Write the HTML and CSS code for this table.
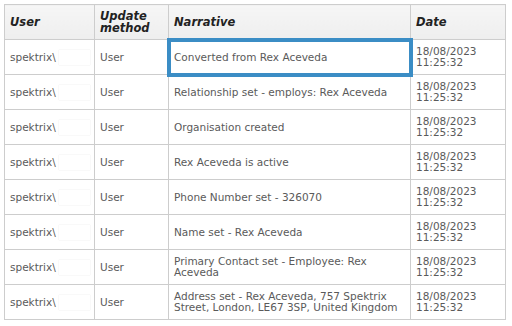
FILE: index.html
```html
<!DOCTYPE html>
<html lang="en">
<head>
    <meta charset="UTF-8">
    <title>Audit Log</title>
    <link rel="stylesheet" href="styles.css">
</head>
<body>
    <div class="log-wrap">
        <table class="log-table">
            <colgroup>
                <col class="col-user">
                <col class="col-method">
                <col class="col-narrative">
                <col class="col-date">
            </colgroup>
            <thead>
                <tr>
                    <th>User</th>
                    <th>Update method</th>
                    <th>Narrative</th>
                    <th>Date</th>
                </tr>
            </thead>
            <tbody>
                <tr>
                    <td class="user">spektrix\<span class="redact"></span></td>
                    <td>User</td>
                    <td class="selected">Converted from Rex Aceveda</td>
                    <td>18/08/2023<br>11:25:32</td>
                </tr>
                <tr>
                    <td class="user">spektrix\<span class="redact"></span></td>
                    <td>User</td>
                    <td>Relationship set - employs: Rex Aceveda</td>
                    <td>18/08/2023<br>11:25:32</td>
                </tr>
                <tr>
                    <td class="user">spektrix\<span class="redact"></span></td>
                    <td>User</td>
                    <td>Organisation created</td>
                    <td>18/08/2023<br>11:25:32</td>
                </tr>
                <tr>
                    <td class="user">spektrix\<span class="redact"></span></td>
                    <td>User</td>
                    <td>Rex Aceveda is active</td>
                    <td>18/08/2023<br>11:25:32</td>
                </tr>
                <tr>
                    <td class="user">spektrix\<span class="redact"></span></td>
                    <td>User</td>
                    <td>Phone Number set - 326070</td>
                    <td>18/08/2023<br>11:25:32</td>
                </tr>
                <tr>
                    <td class="user">spektrix\<span class="redact"></span></td>
                    <td>User</td>
                    <td>Name set - Rex Aceveda</td>
                    <td>18/08/2023<br>11:25:32</td>
                </tr>
                <tr>
                    <td class="user">spektrix\<span class="redact"></span></td>
                    <td>User</td>
                    <td>Primary Contact set - Employee: Rex Aceveda</td>
                    <td>18/08/2023<br>11:25:32</td>
                </tr>
                <tr>
                    <td class="user">spektrix\<span class="redact"></span></td>
                    <td>User</td>
                    <td>Address set - Rex Aceveda, 757 Spektrix Street, London, LE67 3SP, United Kingdom</td>
                    <td>18/08/2023<br>11:25:32</td>
                </tr>
            </tbody>
        </table>
    </div>
</body>
</html>
```

FILE: styles.css
```css
body {
    margin: 0;
    background: #fff;
    font-family: 'DejaVu Sans', Verdana, sans-serif;
    color: #5a5a5a;
}

.log-wrap {
    padding: 4px;
}

.log-table {
    width: 501px;
    border-collapse: collapse;
    table-layout: fixed;
    font-size: 10.5px;
    line-height: 11px;
}

.col-user { width: 90px; }
.col-method { width: 74px; }
.col-narrative { width: 242px; }
.col-date { width: 95px; }

.log-table th,
.log-table td {
    border: 1px solid #cdcdcd;
    height: 34px;
    padding: 0 5px;
    text-align: left;
    vertical-align: middle;
}

.log-table th {
    background: linear-gradient(#f6f6f6, #eeeeee);
    color: #222;
    font-style: italic;
    font-weight: bold;
    font-size: 11.5px;
    line-height: 12px;
}

.log-table td.user {
    white-space: nowrap;
    overflow: hidden;
}

.log-table td.selected {
    outline: 4px solid #3b8dc5;
    outline-offset: -2px;
}

/* blanked-out account name */
.redact {
    display: inline-block;
    width: 31px;
    height: 15px;
    margin-left: 3px;
    vertical-align: middle;
    background: #fff;
    box-shadow: 0 0 1px #d8d8d8;
}
```
